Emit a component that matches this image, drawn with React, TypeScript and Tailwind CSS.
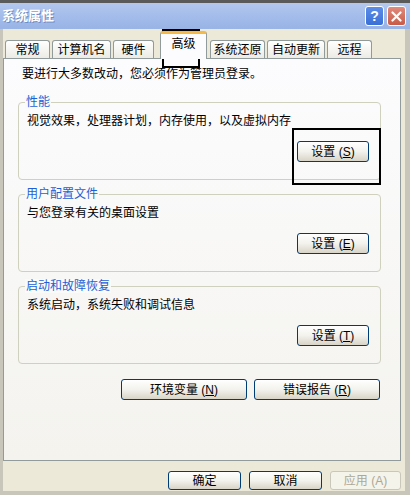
import type { ReactNode } from 'react';

const XpButton = ({ children, className = '', disabled = false }: { children: ReactNode; className?: string; disabled?: boolean }) => (
  <div
    className={`flex items-center justify-center rounded-[3px] border text-[12px] leading-[14px] ${
      disabled
        ? 'border-[#c9c7ba] bg-[#f5f4ea] text-[#aca899]'
        : 'border-[#003c74] bg-gradient-to-b from-white via-[#f3f2ec] to-[#d9d4c8] text-black'
    } ${className}`}
  >
    {children}
  </div>
);

const Tab = ({ label, selected = false, className = '' }: { label: string; selected?: boolean; className?: string }) =>
  selected ? (
    <div
      className={`relative z-10 -mb-px flex h-[28px] items-start justify-center rounded-t-[3px] border border-b-0 border-[#919b9c] border-t-[3px] border-t-[#f5b94a] bg-[#fcfcfe] pt-[3px] text-[12px] leading-[14px] ${className}`}
    >
      {label}
    </div>
  ) : (
    <div
      className={`flex h-[18px] items-center justify-center rounded-t-[3px] border border-b-0 border-[#919b9c] bg-gradient-to-b from-white to-[#ecebe5] text-[12px] leading-[14px] ${className}`}
    >
      {label}
    </div>
  );

const Group = ({ title, text, btn, className = '' }: { title: string; text: string; btn: ReactNode; className?: string }) => (
  <div className={`relative ml-[14px] h-[78px] w-[363px] rounded-[4px] border border-[#d0d0bf] ${className}`}>
    {/* group label sits on the top border */}
    <span className="absolute left-[6px] top-[-8px] bg-[#fafaf8] px-[1px] text-[12px] leading-[14px] text-[#1f5fd6]">{title}</span>
    <p className="pl-[8px] pt-[11px] text-[12px] leading-[14px]">{text}</p>
    <div className="mt-[13px] flex justify-end pr-[11px]">
      <XpButton className="h-[21px] w-[72px]">{btn}</XpButton>
    </div>
  </div>
);

export default function App() {
  return (
    <div className="relative flex h-[495px] w-[410px] flex-col overflow-hidden bg-[#ece9d8] font-['Liberation_Sans','Noto_Sans_CJK_SC',sans-serif] text-black">
      {/* Title bar */}
      <div className="flex h-[29px] shrink-0 items-center border-t-[3px] border-[#5a5a5a] bg-gradient-to-b from-[#b4c8ee] via-[#a3bcea] to-[#98b3e6] pl-[2px] pr-[4px]">
        <span className="text-[13px] font-bold leading-[16px] text-white [text-shadow:1px_1px_0_#6f8cc4]">系统属性</span>
        <div className="ml-auto flex gap-[3px]">
          <div className="flex h-[20px] w-[19px] items-center justify-center rounded-[3px] border border-white bg-gradient-to-b from-[#5b8de8] to-[#3a6fd6] text-[14px] font-bold leading-none text-white">?</div>
          <div className="flex h-[20px] w-[19px] items-center justify-center rounded-[3px] border border-white bg-gradient-to-b from-[#e08a7c] to-[#c85a48]">
            <svg width="11" height="11" viewBox="0 0 11 11">
              <path d="M1.5 1.5 L9.5 9.5 M9.5 1.5 L1.5 9.5" stroke="white" strokeWidth="2.2" strokeLinecap="round" />
            </svg>
          </div>
        </div>
      </div>

      {/* Body with window frame */}
      <div className="flex flex-1 flex-col border-l-[3px] border-r-[5px] border-b-[4px] border-[#c8c6bb]">
        {/* Tabs */}
        <div className="flex h-[29px] items-end pl-[2px]">
          <Tab label="常规" className="w-[45px]" />
          <Tab label="计算机名" className="ml-[2px] w-[59px]" />
          <Tab label="硬件" className="ml-[2px] w-[41px]" />
          <Tab label="高级" selected className="ml-[6px] w-[47px]" />
          <Tab label="系统还原" className="ml-[3px] w-[55px]" />
          <Tab label="自动更新" className="ml-[2px] w-[58px]" />
          <Tab label="远程" className="ml-[2px] w-[45px]" />
        </div>

        {/* Tab page */}
        <div className="h-[403px] w-[398px] border border-[#919b9c] bg-gradient-to-b from-[#fcfcfe] to-[#f4f3ee]">
          <p className="pl-[18px] pt-[8px] text-[12px] leading-[14px]">要进行大多数改动，您必须作为管理员登录。</p>
          <Group title="性能" text="视觉效果，处理器计划，内存使用，以及虚拟内存" btn={<>设置 (<u>S</u>)</>} className="mt-[21px]" />
          <Group title="用户配置文件" text="与您登录有关的桌面设置" btn={<>设置 (<u>E</u>)</>} className="mt-[14px]" />
          <Group title="启动和故障恢复" text="系统启动，系统失败和调试信息" btn={<>设置 (<u>T</u>)</>} className="mt-[14px]" />
          <div className="mt-[15px] flex gap-[7px] pl-[117px]">
            <XpButton className="h-[21px] w-[126px]">环境变量 (<u>N</u>)</XpButton>
            <XpButton className="h-[21px] w-[126px]">错误报告 (<u>R</u>)</XpButton>
          </div>
        </div>

        {/* Dialog buttons */}
        <div className="mt-[10px] flex gap-[8px] pl-[165px]">
          <XpButton className="h-[19px] w-[73px]">确定</XpButton>
          <XpButton className="h-[19px] w-[73px]">取消</XpButton>
          <XpButton disabled className="h-[19px] w-[71px]">应用 (A)</XpButton>
        </div>
      </div>

      {/* Highlight boxes drawn over the dialog */}
      <div className="pointer-events-none absolute left-[162px] top-[29px] h-[39px] w-[38px] border-2 border-black" />
      <div className="pointer-events-none absolute left-[292px] top-[128px] h-[57px] w-[89px] border-2 border-black" />
    </div>
  );
}
